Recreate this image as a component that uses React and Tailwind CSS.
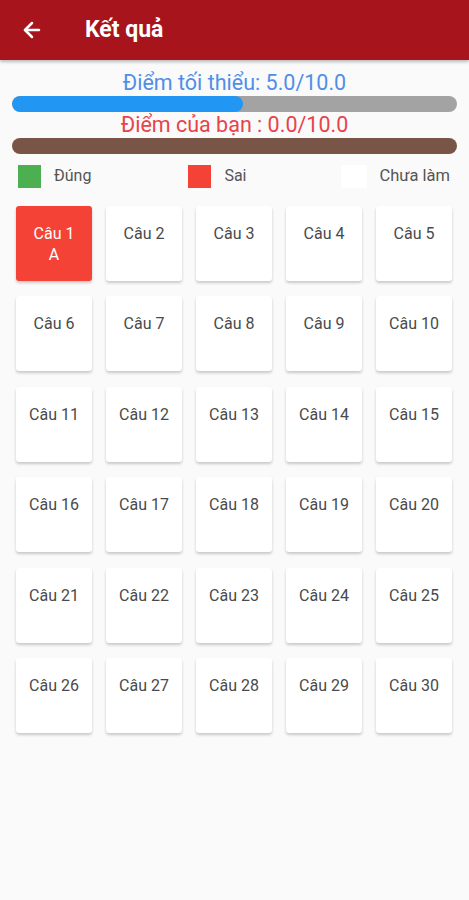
import React from 'react';
import { ArrowLeft } from 'lucide-react';

const questions = Array.from({ length: 30 }, (_, i) => i + 1);

function App() {
  return (
    <div className="min-h-screen bg-[#fafafa]" style={{ fontFamily: 'Roboto, "Noto Sans", sans-serif' }}>
      <div className="h-[60px] bg-[#a8141c] flex items-center shadow-[0_2px_3px_rgba(0,0,0,0.25)]">
        <ArrowLeft className="w-[24px] h-[24px] text-white ml-[20px]" strokeWidth={2.5} />
        <h1 className="ml-[41px] text-white text-[23px] font-bold">Kết quả</h1>
      </div>

      <div className="px-[12px] pt-[10px]">
        <div className="text-center text-[21.5px] leading-[26px] text-[#4f8fe8]">Điểm tối thiểu: 5.0/10.0</div>
        <div className="h-[16px] rounded-full bg-[#a3a3a3] overflow-hidden">
          <div className="h-full w-[52%] bg-[#2196f3] rounded-full"></div>
        </div>
        <div className="text-center text-[21.5px] leading-[26px] text-[#e8434a]">Điểm của bạn : 0.0/10.0</div>
        <div className="h-[16px] rounded-full bg-[#795548]"></div>
      </div>

      <div className="flex items-center px-[18px] mt-[10px] h-[24px]">
        <div className="w-[23px] h-[23px] bg-[#4caf50]"></div>
        <span className="ml-[13px] text-[16px] text-[#555]">Đúng</span>
        <div className="w-[23px] h-[23px] bg-[#f44336] ml-[97px]"></div>
        <span className="ml-[13px] text-[16px] text-[#555]">Sai</span>
        <div className="w-[26px] h-[23px] bg-white ml-auto"></div>
        <span className="ml-[12px] mr-[1px] text-[16.5px] text-[#555]">Chưa làm</span>
      </div>

      <div className="grid grid-cols-5 gap-x-[14px] gap-y-[15.4px] pl-[16px] pr-[17px] mt-[18px]">
        {questions.map((n) => (
          <div
            key={n}
            className={
              n === 1
                ? 'h-[75px] rounded-[3px] bg-[#f44336] text-white shadow-[0_2px_3px_rgba(0,0,0,0.2)] flex flex-col items-center pt-[17px] text-[16px] leading-[21px]'
                : 'h-[75px] rounded-[3px] bg-white text-[#4a4a4a] shadow-[0_2px_3px_rgba(0,0,0,0.2)] flex flex-col items-center pt-[17px] text-[16px] leading-[21px]'
            }
          >
            <span>Câu {n}</span>
            {n === 1 && <span>A</span>}
          </div>
        ))}
      </div>
    </div>
  );
}

export default App;
